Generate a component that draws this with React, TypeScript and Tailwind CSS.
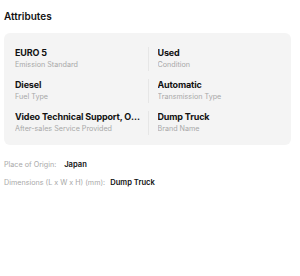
import React from "react";

const cells = [
  { v: "EURO 5", l: "Emission Standard" },
  { v: "Used", l: "Condition" },
  { v: "Diesel", l: "Fuel Type" },
  { v: "Automatic", l: "Transmission Type" },
  { v: "Video Technical Support, Online Support", l: "After-sales Service Provided" },
  { v: "Dump Truck", l: "Brand Name" },
];

export default function App() {
  return (
    <div className="w-[300px] h-[276px] bg-white px-1 pt-[10px]" style={{ fontFamily: "Inter, 'Noto Sans', sans-serif" }}>
      <h2 className="text-[10px] leading-[12px] font-semibold text-[#111]">Attributes</h2>
      <div className="mt-[11px] w-[287px] rounded-[6px] bg-[#f4f4f4] px-[11px] pt-[14px] pb-[10px] grid grid-cols-2 gap-y-[8px]">
        {cells.map((c, i) => (
          <div
            key={i}
            className={
              i % 2 === 1
                ? "min-w-0 border-l border-[#e6e6e6] pl-[9px]"
                : "min-w-0 pr-[4px]"
            }
          >
            <div className="text-[9px] leading-[11px] font-bold tracking-[-0.15px] text-[#111] truncate">{c.v}</div>
            <div className="text-[7.2px] leading-[13px] text-[#a8a8a8] truncate">{c.l}</div>
          </div>
        ))}
      </div>
      <div className="mt-[15px] flex flex-col gap-[8px]">
        <div className="flex items-baseline text-[7.2px] leading-[10px]">
          <span className="text-[#a8a8a8]">Place of Origin:</span>
          <span className="ml-[8px] text-[7.6px] font-semibold text-[#111]">Japan</span>
        </div>
        <div className="flex items-baseline text-[7.2px] leading-[10px]">
          <span className="text-[#a8a8a8]">Dimensions (L x W x H) (mm):</span>
          <span className="ml-[5px] text-[7.6px] font-semibold text-[#111]">Dump Truck</span>
        </div>
      </div>
    </div>
  );
}
